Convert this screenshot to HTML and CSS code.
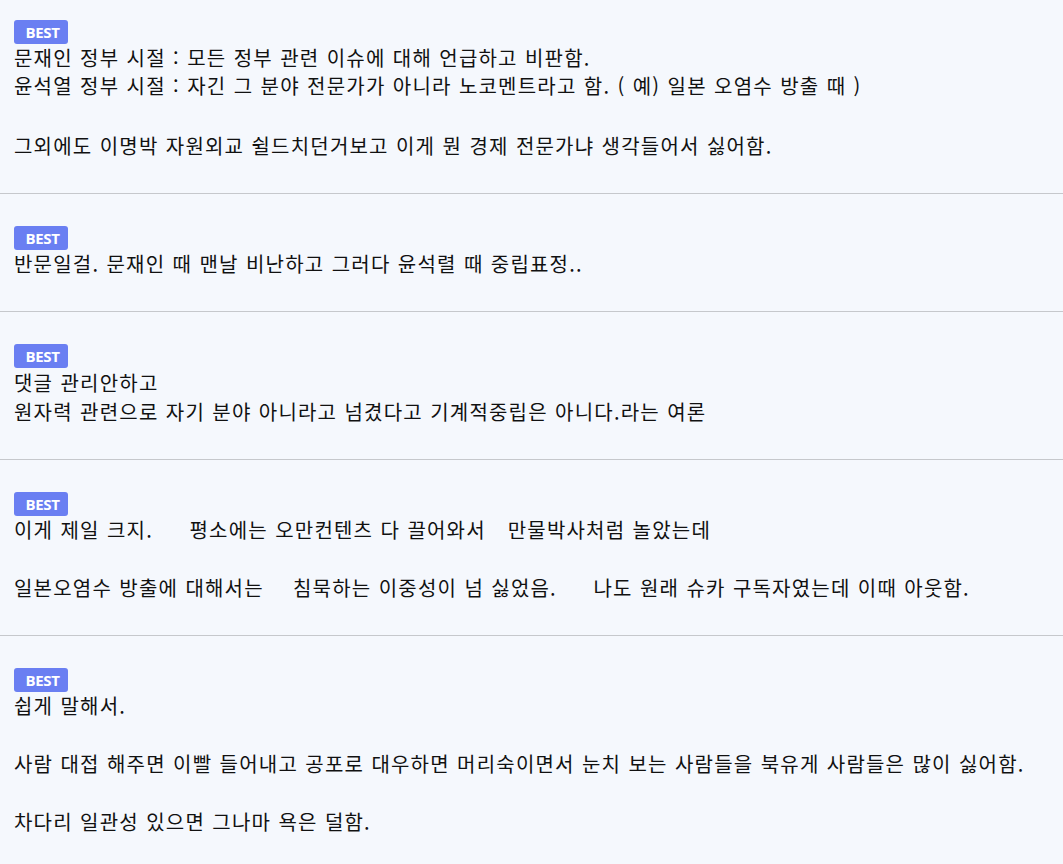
FILE: index.html
```html
<!DOCTYPE html>
<html lang="ko">
<head>
<meta charset="utf-8">
<title>BEST 댓글</title>
<link rel="stylesheet" href="styles.css">
</head>
<body>
<ul class="comments">
  <li class="comment">
    <span class="badge">BEST</span>
    <div class="body">
      <p class="line">문재인 정부 시절 : 모든 정부 관련 이슈에 대해 언급하고 비판함.</p>
      <p class="line">윤석열 정부 시절 : 자긴 그 분야 전문가가 아니라 노코멘트라고 함. ( 예) 일본 오염수 방출 때 )</p>
      <p class="blank blank-wide"></p>
      <p class="line">그외에도 이명박 자원외교 쉴드치던거보고 이게 뭔 경제 전문가냐 생각들어서 싫어함.</p>
    </div>
  </li>
  <li class="comment">
    <span class="badge">BEST</span>
    <div class="body">
      <p class="line">반문일걸. 문재인 때 맨날 비난하고 그러다 윤석렬 때 중립표정..</p>
    </div>
  </li>
  <li class="comment comment-loose">
    <span class="badge">BEST</span>
    <div class="body">
      <p class="line">댓글 관리안하고</p>
      <p class="line">원자력 관련으로 자기 분야 아니라고 넘겼다고 기계적중립은 아니다.라는 여론</p>
    </div>
  </li>
  <li class="comment">
    <span class="badge">BEST</span>
    <div class="body">
      <p class="line">이게 제일 크지.     평소에는 오만컨텐츠 다 끌어와서   만물박사처럼 놀았는데</p>
      <p class="blank"></p>
      <p class="line">일본오염수 방출에 대해서는    침묵하는 이중성이 넘 싫었음.     나도 원래 슈카 구독자였는데 이때 아웃함.</p>
    </div>
  </li>
  <li class="comment">
    <span class="badge">BEST</span>
    <div class="body">
      <p class="line">쉽게 말해서.</p>
      <p class="blank"></p>
      <p class="line">사람 대접 해주면 이빨 들어내고 공포로 대우하면 머리숙이면서 눈치 보는 사람들을 북유게 사람들은 많이 싫어함.</p>
      <p class="blank"></p>
      <p class="line">차다리 일관성 있으면 그나마 욕은 덜함.</p>
    </div>
  </li>
</ul>
</body>
</html>
```

FILE: styles.css
```css
html, body {
  margin: 0;
  padding: 0;
  background: #f5f8fd;
}

body {
  font-family: "Noto Sans CJK KR", "Noto Sans", sans-serif;
  color: #111111;
}

.comments {
  list-style: none;
  margin: 0;
  padding: 0;
}

.comment {
  display: flex;
  flex-direction: column;
  align-items: flex-start;
  padding: 32px 14px 33px;
  border-bottom: 1px solid #c6c8cc;
}

.comment:first-child {
  padding-top: 20px;
}

.comment:last-child {
  border-bottom: none;
}

.badge {
  display: inline-flex;
  align-items: center;
  justify-content: center;
  width: 54px;
  height: 24px;
  padding-left: 3px;
  border-radius: 3px;
  background: #6a7ff2;
  color: #ffffff;
  font-family: "Open Sans", "Noto Sans", sans-serif;
  font-weight: 700;
  font-size: 15px;
  letter-spacing: -0.3px;
  box-sizing: border-box;
}

.body {
  display: flex;
  flex-direction: column;
}

.line {
  margin: 0;
  font-size: 20px;
  line-height: 28px;
  letter-spacing: 1.2px;
  word-spacing: 0.5px;
  white-space: pre-wrap;
}

.comment-loose .line {
  line-height: 29px;
}

.blank {
  margin: 0;
  height: 30px;
}

.blank-wide {
  height: 32px;
}
```
